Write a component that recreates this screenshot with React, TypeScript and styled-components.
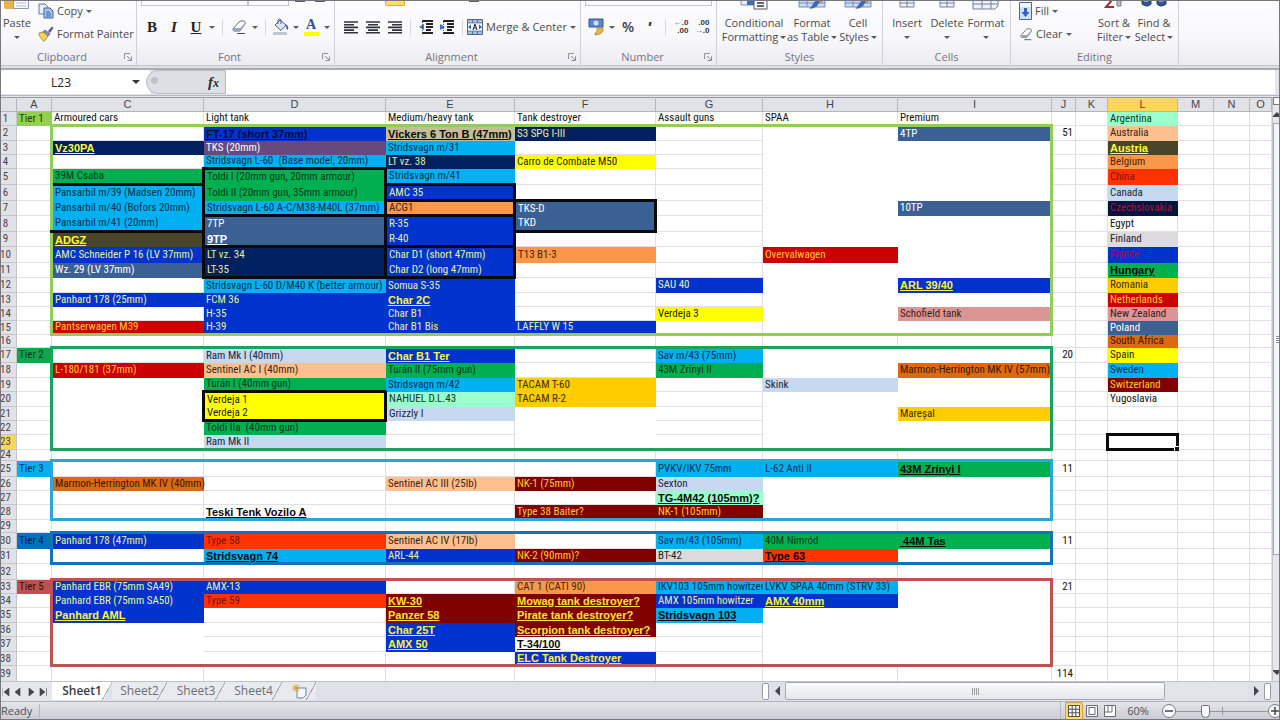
import React from "react";
import styled, { createGlobalStyle, css } from "styled-components";

const CELL_FONT = `"Roboto Condensed", "Liberation Sans", Arial, sans-serif`;
const UI_FONT = `"Open Sans", "Noto Sans", sans-serif`;

const GlobalStyle = createGlobalStyle`
  *, *::before, *::after { box-sizing: border-box; }
  body { margin: 0; background: #e4e5ea; font-family: ${UI_FONT}; }
  button, input { font: inherit; color: inherit; margin: 0; padding: 0; border: 0; background: none; }
`;

/* ---------- shell ---------- */

const Window = styled.main`
  display: flex;
  flex-direction: column;
  height: 100vh;
  overflow: hidden;
  outline: 1px solid #77777d;
  outline-offset: -1px;
  color: #4a4a50;
  font-size: 11px;
  line-height: 14px;
`;

/* ---------- ribbon ---------- */

const Ribbon = styled.header`
  display: flex;
  height: 66px;
  flex: none;
  overflow: hidden;
  background: linear-gradient(#fdfdfe, #f8f8fb 60%, #ececf1);
  border-bottom: 1px solid #c4c5cc;
`;

const Group = styled.section<{ $w: number }>`
  display: flex;
  flex-direction: column;
  width: ${(p) => p.$w}px;
  flex: none;
  border-right: 1px solid #d0d1d8;
`;

const GroupBody = styled.div`
  display: flex;
  height: 50px;
  padding-left: 4px;
`;

const GroupTitle = styled.footer<{ $plain?: boolean }>`
  display: flex;
  align-items: center;
  height: 14px;
  color: #74757f;
  padding-right: ${(p) => (p.$plain ? 0 : 4)}px;
  h2 { flex: 1; margin: 0; font-size: 11px; font-weight: 400; text-align: center; }
`;

const Stack = styled.div<{ $pl?: number; $w?: number }>`
  display: flex;
  flex-direction: column;
  padding-left: ${(p) => p.$pl || 0}px;
  width: ${(p) => (p.$w ? `${p.$w}px` : "auto")};
`;

const ToolRow = styled.div`
  display: flex;
  align-items: center;
  height: 24px;
`;

const StubRow = styled.div`
  display: flex;
  align-items: flex-start;
  height: 15px;
`;

const StubBox = styled.span<{ $w: number }>`
  width: ${(p) => p.$w}px;
  height: 6px;
  background: #fff;
  border: 1px solid #c6c7ce;
  border-top: 0;
`;

const StubHighlight = styled.span`
  width: 20px;
  height: 6px;
  margin-left: 46px;
  background: #ffe05a;
  border: 1px solid #d9ab3a;
  border-top: 0;
  border-radius: 0 0 2px 2px;
`;

const StubMark = styled.span<{ $ml: number }>`
  width: 10px;
  height: 2px;
  margin-left: ${(p) => p.$ml}px;
  background: #5c5e6a;
`;

const ToolButton = styled.button<{ $w: number }>`
  display: flex;
  align-items: center;
  justify-content: center;
  width: ${(p) => p.$w}px;
  height: 22px;
  flex: none;
`;

const Letter = styled.span<{ $kind: "b" | "i" | "u" }>`
  font: bold 15px/16px "Liberation Serif", serif;
  color: #222;
  ${(p) => p.$kind === "i" && css`font-style: italic;`}
  ${(p) => p.$kind === "u" && css`text-decoration: underline;`}
`;

const Rule = styled.span<{ $w: number }>`
  width: ${(p) => p.$w}px;
  height: 17px;
  flex: none;
  background: linear-gradient(#d9dae0, #d9dae0) center / 1px 100% no-repeat;
`;

const LabelButton = styled.button<{ $h?: number }>`
  display: flex;
  align-items: center;
  gap: 3px;
  height: ${(p) => p.$h || 24}px;
  white-space: nowrap;
  text-align: left;
`;

const TallButton = styled.button<{ $w: number }>`
  display: flex;
  flex-direction: column;
  align-items: center;
  width: ${(p) => p.$w}px;
  height: 46px;
  flex: none;
  white-space: nowrap;
  > svg { height: 16px; }
`;

const TallLine = styled.span`
  display: flex;
  align-items: center;
  gap: 2px;
  height: 14px;
`;

const Caret = styled.i<{ $big?: boolean }>`
  width: 0;
  height: 0;
  border: ${(p) => (p.$big ? 4 : 3)}px solid transparent;
  border-top-color: ${(p) => (p.$big ? "#33343a" : "#5a5b62")};
  border-bottom: 0;
`;

const Sign = styled.span<{ $heavy?: boolean }>`
  font-size: 14px;
  font-weight: ${(p) => (p.$heavy ? 800 : 600)};
  color: #3a3b41;
`;

const Launcher = () => (
  <svg width="8" height="8" viewBox="0 0 8 8" fill="none" stroke="#8e8f98">
    <path d="M0.5 6V0.5H6" />
    <path d="M7.5 3.5V7.5H3.5M3 3L7 7" />
  </svg>
);

const CopyIcon = () => (
  <svg width="16" height="16" viewBox="0 0 16 16">
    <path d="M1 1h6l3 3v7H1z" fill="#e9f0fb" stroke="#5577b5" />
    <path d="M6 5h6l3 3v7H6z" fill="#a9c6ee" stroke="#3c62a6" />
    <path d="M8 9h4M8 11h5M8 13h5" stroke="#3c62a6" />
  </svg>
);
const BrushIcon = () => (
  <svg width="16" height="16" viewBox="0 0 16 16">
    <path d="M10 5L14 0.5L15.5 2L12 7z" fill="#5b5a92" />
    <path d="M7 4l5 4-2 2-5-4z" fill="#8f8dc0" stroke="#4d4c7a" strokeWidth=".7" />
    <path d="M5 6l5 4-4 5.500C3 13 1 10 1 7z" fill="#f3d35b" stroke="#9a7d20" strokeWidth=".8" />
  </svg>
);
const PasteStub = () => (
  <svg width="26" height="16" viewBox="0 0 26 16">
    <path d="M0 0h9v9H2q-2 0-2-2z" fill="#e9b54a" />
    <path d="M9.500 0h15v8.500h-15z" fill="#f6f8fc" stroke="#8b98b5" />
    <path d="M12 3h10M12 6h10" stroke="#b4bfd6" />
  </svg>
);
const EraserIcon = ({ w = 16 }: { w?: number }) => (
  <svg width={w} height="16" viewBox="0 0 16 16">
    <path d="M2 10L8 3q1-1 2-1h3q2 1 1 3L9 12H3q-2-1-1-2z" fill="#fff" stroke="#6c6f7b" />
    <path d="M3 9h6l5-5v2L9 12H3z" fill="#9ea6b8" />
    <path d="M6 14.500h8" stroke="#4d4f58" />
  </svg>
);
const BucketIcon = () => (
  <svg width="18" height="18" viewBox="0 0 18 18">
    <path d="M3 7L8 2l6 5-5 5.500z" fill="#dfe6f2" stroke="#4e5f85" />
    <path d="M6 6V2q1.500-2 3 0v4" fill="none" stroke="#4e5f85" />
    <path d="M13 6q4 1 3 6q-2-1-2-4z" fill="#3560b4" />
    <path d="M1 14h14v3H1z" fill="#c2c8d4" />
  </svg>
);
const FontColor = styled.span`
  width: 15px;
  height: 18px;
  border-bottom: 4px solid #ffff00;
  font: bold 14px/14px "Liberation Serif", serif;
  color: #2f4f96;
  text-align: center;
`;
const Lines = ({ kind }: { kind: "l" | "c" | "r" }) => {
  const x = { l: 0, c: 2, r: 4 }[kind];
  return (
    <svg width="14" height="13" viewBox="0 0 14 13" stroke="#33343a" strokeWidth="1.600">
      <path d={`M0 1h14M${x} 3.700h10M0 6.400h14M${x} 9.100h10M0 11.800h14`} />
    </svg>
  );
};
const Indent = ({ out }: { out?: boolean }) => (
  <svg width="15" height="14" viewBox="0 0 15 14">
    <path d="M4 1h11M8 4h7M8 7h7M8 10h5M4 13h11" stroke="#222" strokeWidth="1.800" />
    <path d={out ? "M6 4v6L1 7z" : "M1 4v6l5-3z"} fill="#3e6fc0" />
    <path d="M4.500 0v14" stroke="#556" strokeDasharray="1 1" />
  </svg>
);
const MergeIcon = () => (
  <svg width="16" height="16" viewBox="0 0 16 16">
    <path d="M.5.5h15v15H.5z" fill="#a9bfe4" stroke="#4f658f" />
    <path d="M.5 4h15M.5 12h15M5.500.5V4M10.500.5V4M5.500 12v3.500M10.500 12v3.500" stroke="#5b6f98" />
    <path d="M1 4.500h14v7H1z" fill="#fff" />
    <path d="M1 8l3-2.500v5zM15 8l-3-2.500v5z" fill="#2f5fb0" />
    <path d="M6 11l2-6 2 6M7 9h2" fill="none" stroke="#222" />
  </svg>
);
const CurrencyIcon = () => (
  <svg width="17" height="18" viewBox="0 0 17 18">
    <path d="M1 1h14v8H1z" fill="#5d86cf" stroke="#31549a" />
    <circle cx="8" cy="5" r="2.500" fill="#cfdff7" />
    <path d="M9 10h6v3q-2 4-8 4v-2q3-1 2-5z" fill="#e6b84a" stroke="#a9801f" strokeWidth=".7" />
  </svg>
);
const Decimals = styled.span`
  display: block;
  font: bold 8px/8px "Liberation Sans", sans-serif;
  color: #33343a;
  text-align: right;
  b { color: #2f5fb0; }
`;
const CondStub = () => (
  <svg width="30" height="16" viewBox="0 0 30 16">
    <path d="M2 0h24v5H2z" fill="#e8eefb" stroke="#7f8fb5" />
    <path d="M8 0h8v5H8z" fill="#4169c0" />
    <path d="M15 0h13v9H15z" fill="#fff" stroke="#555" />
    <path d="M18 3h7M18 6h7" stroke="#333" strokeWidth="1.500" />
  </svg>
);
const TableStub = () => (
  <svg width="30" height="16" viewBox="0 0 30 16">
    <path d="M2 0h26v7H2zM10 0v7M19 0v7M2 3h26" fill="#cddcf5" stroke="#6f8cc4" />
    <path d="M24 0l-4 6q-5 4-8 2q3-1 4-4l3-4z" fill="#3e68b2" />
    <path d="M22 0h5l-4 4z" fill="#c98d4e" />
  </svg>
);
const GridStub = ({ wide }: { wide?: boolean }) => (
  <svg width="30" height="16" viewBox="0 0 30 16">
    <path d={wide ? "M2 0v9h22l3-3V0M2 4h25M11 0v9M20 0v9" : "M8 0v7h14V0M8 3h14M15 0v7"} fill="#eef2fb" stroke="#76809f" />
  </svg>
);
const FillIcon = () => (
  <svg width="13" height="18" viewBox="0 0 13 18">
    <path d="M.5.5h12v17H.5z" fill="#cfe0f8" stroke="#4468ad" />
    <path d="M1 1h11v4H1z" fill="#f4f7fc" />
    <path d="M5 6h3v4h2.500L6.500 15 2.500 10H5z" fill="#2f62c4" />
  </svg>
);
const SortStub = () => (
  <svg width="22" height="16" viewBox="0 0 22 16">
    <path d="M9 0L3 7h8" fill="none" stroke="#9c2f2f" strokeWidth="2" />
    <path d="M14 0h4v6h-4z" fill="#b9bcc8" stroke="#7a7d88" />
  </svg>
);
const FindStub = () => (
  <svg width="26" height="16" viewBox="0 0 26 16">
    <path d="M1 0h9v4q-4 4-9 0zM16 0h9v4q-5 4-9 0z" fill="#33578f" stroke="#1f3661" />
    <path d="M3 1h4M18 1h4" stroke="#9dbbe8" strokeWidth="1.500" />
  </svg>
);

/* ---------- formula bar ---------- */

const FormulaBar = styled.div`
  display: flex;
  flex: none;
  height: 31px;
  padding: 4px 5px 3px 0;
  background: linear-gradient(#dfe0e5 0 2px, #a9aab2 2px 4px, #e4e5ea 4px 29px, #b4b5bd 29px 30px, #e4e5ea 30px);
`;
const NameInput = styled.input`
  width: 122px;
  height: 24px;
  background: #fff;
  color: #222;
  text-align: center;
  font-size: 12px;
`;
const NameDrop = styled.button`
  width: 28px;
  height: 24px;
  background: #fff;
  display: flex;
  align-items: center;
  justify-content: center;
`;
const FxPill = styled.div`
  display: flex;
  align-items: center;
  justify-content: space-between;
  width: 80px;
  margin-left: -4px;
  height: 24px;
  padding: 0 6px 0 4px;
  background: #dddfe5;
  border: 1px solid #b8bac2;
  border-radius: 12px 0 0 12px;
  button { font: italic bold 15px/18px "Liberation Serif", serif; color: #2b2c30; }
  small { font-size: 12px; }
`;
const Knob = styled.span`
  width: 7px;
  height: 7px;
  margin-bottom: 4px;
  border-radius: 50%;
  background: #bfc1c8;
`;
const FormulaInput = styled.input`
  flex: 1;
  height: 24px;
  background: #fff;
`;

/* ---------- grid ---------- */

const Body = styled.div`
  display: flex;
  flex: 1;
  min-height: 0;
  background: #fff;
`;
const SheetArea = styled.div`
  flex: 1;
  min-width: 0;
  overflow: hidden;
`;
const Sheet = styled.table`
  width: 100%;
  table-layout: fixed;
  border-collapse: collapse;
  background: #fff;
  font: 11px/10px ${CELL_FONT};
  color: #111;
`;
const Row = styled.tr<{ $h: number }>`
  height: ${(p) => p.$h}px;
`;
const ColHead = styled.th<{ $on?: boolean }>`
  padding: 0;
  background: ${(p) => (p.$on ? "linear-gradient(#f9d567, #ffd94a)" : "#e1e2e8")};
  border: 1px solid #b4b6be;
  border-top: 1px solid #9b9ca3;
  color: ${(p) => (p.$on ? "#7a4a00" : "#44454c")};
  font: 11px/11px "Liberation Sans", sans-serif;
`;
const RowHead = styled.th<{ $on?: boolean }>`
  padding: 0;
  background: ${(p) => (p.$on ? "#ffd65c" : "#e1e2e8")};
  border: 1px solid #c3c5cc;
  font-weight: 400;
  color: #44454c;
  span { display: block; margin-left: -6px; text-align: center; }
`;

type Sides = { t?: string; r?: string; b?: string; l?: string };

const Cell = styled.td<{ $bg?: string; $fg?: string; $strong?: boolean; $right?: boolean; $sides: Sides; $line: string }>`
  position: relative;
  padding: 0 2px;
  white-space: pre;
  vertical-align: middle;
  border: 1px solid ${(p) => p.$line};
  background-color: ${(p) => p.$bg || "transparent"};
  color: ${(p) => p.$fg || "#111"};
  text-align: ${(p) => (p.$right ? "right" : "left")};
  ${(p) => p.$strong && css`
    font-family: "Liberation Sans", Arial, sans-serif;
    font-weight: 700;
    text-decoration: underline;
  `}
  ${(p) => p.$sides.t && css`border-top: 3px solid ${p.$sides.t};`}
  ${(p) => p.$sides.r && css`border-right: 3px solid ${p.$sides.r};`}
  ${(p) => p.$sides.b && css`border-bottom: 3px solid ${p.$sides.b};`}
  ${(p) => p.$sides.l && css`border-left: 3px solid ${p.$sides.l};`}
`;
const FillHandle = styled.i`
  position: absolute;
  right: -3px;
  bottom: -3px;
  width: 5px;
  height: 5px;
  background: #111;
  border-top: 1px solid #fff;
  border-left: 1px solid #fff;
`;

/* ---------- scroll bars, tabs, status ---------- */

const VScroll = styled.div`
  display: flex;
  flex-direction: column;
  align-items: center;
  width: 8px;
  background: #e6e7ec;
  border-left: 1px solid #c5c6cd;
  overflow: hidden;
`;
const VSplit = styled.span`
  width: 8px;
  height: 8px;
  border: 1px solid #777982;
  background: #fff;
  flex: none;
`;
const ScrollArrow = styled.button<{ $dir: "up" | "down" | "left" | "right" }>`
  display: flex;
  align-items: center;
  justify-content: center;
  flex: none;
  width: 16px;
  height: 18px;
  &::before {
    content: "";
    border: 5px solid transparent;
    ${(p) => p.$dir === "up" && css`border-top: 0; border-bottom-color: #44454c;`}
    ${(p) => p.$dir === "down" && css`border-bottom: 0; border-top-color: #44454c;`}
    ${(p) => p.$dir === "left" && css`border-left: 0; border-right-color: #44454c;`}
    ${(p) => p.$dir === "right" && css`border-right: 0; border-left-color: #44454c;`}
  }
`;
const VThumb = styled.div`
  width: 100%;
  flex: 4;
  border: 1px solid #a6a8b0;
  border-right: 0;
  background: #f4f5f8;
  display: flex;
  align-items: center;
  justify-content: flex-end;
  i { width: 4px; height: 7px; background: repeating-linear-gradient(#8d8f98 0 1px, #f4f5f8 1px 2px); }
`;
const VSpace = styled.div`
  flex: 1;
`;

const TabBar = styled.nav`
  display: flex;
  flex: none;
  height: 20px;
  background: #dfe1e8;
  border-top: 1px solid #c0c2ca;
`;
const NavArrows = styled.div`
  display: flex;
  width: 52px;
  align-items: center;
  padding-right: 3px;
  background: #e6e7ed;
  button { flex: 1; display: flex; justify-content: center; }
`;
const Tab = styled.button<{ $on?: boolean; $w: number }>`
  display: flex;
  align-items: center;
  justify-content: center;
  position: relative;
  width: ${(p) => p.$w}px;
  height: 18px;
  font-size: 12px;
  font-weight: ${(p) => (p.$on ? 600 : 400)};
  color: ${(p) => (p.$on ? "#3a3b40" : "#6d6e77")};
  background: ${(p) => (p.$on ? "#fff" : "#e9eaef")};
  clip-path: ${(p) => (p.$on ? "polygon(0 0, 100% 0, calc(100% - 8px) 100%, 0 100%)" : "none")};
  &::after {
    content: "";
    position: absolute;
    right: 0;
    top: 0;
    width: 10px;
    height: 18px;
    background: linear-gradient(to bottom right, transparent 48%, #a9abb4 48% 54%, transparent 54%);
  }
`;
const HSplit = styled.span`
  width: 7px;
  height: 17px;
  margin-top: 1px;
  background: #fff;
  border: 1px solid #9a9ca5;
  border-radius: 2px;
`;
const HScroll = styled.div`
  display: flex;
  width: 518px;
  margin-left: auto;
  padding-right: 9px;
`;
const HTrack = styled.div`
  display: flex;
  flex: 1;
  padding-right: 83px;
  background: #e3e4ea;
`;
const HThumb = styled.div`
  flex: 1;
  height: 18px;
  border: 1px solid #a6a8b0;
  border-radius: 2px;
  background: linear-gradient(#fafafc, #e6e7ed);
  display: flex;
  align-items: center;
  justify-content: center;
  i { width: 7px; height: 7px; background: repeating-linear-gradient(90deg, #9c9ea7 0 1px, #f0f1f4 1px 2px); }
`;
const StatusBar = styled.footer`
  display: flex;
  align-items: center;
  flex: none;
  height: 19px;
  border-top: 1px solid #b2b4bc;
  background: linear-gradient(#e4e5ea, #c9cbd3);
  color: #505158;
`;
const Ready = styled.span`
  width: 40px;
  border-right: 1px solid #b4b6be;
  padding-left: 1px;
`;
const ViewTools = styled.div`
  display: flex;
  align-items: center;
  margin-left: auto;
  padding-left: 4px;
  border-left: 1px solid #b4b6be;
`;
const ViewButton = styled.button<{ $on?: boolean }>`
  width: 18px;
  height: 18px;
  display: flex;
  align-items: center;
  justify-content: center;
  ${(p) => p.$on && css`background: #ffd96a; border-radius: 2px; box-shadow: inset 0 0 0 1px #d3a03a;`}
`;
const ZoomLabel = styled.output`
  width: 38px;
  text-align: center;
  margin-right: 5px;
`;
const RoundButton = styled.button`
  width: 14px;
  height: 14px;
  flex: none;
  display: flex;
  align-items: center;
  justify-content: center;
  border: 1px solid #77798a;
  border-radius: 50%;
  background: #fafafc;
`;
const Slider = styled.input`
  appearance: none;
  width: 92px;
  height: 14px;
  background: linear-gradient(#9698a1, #9698a1) center / 100% 1px no-repeat,
    linear-gradient(#9698a1, #9698a1) center / 1px 8px no-repeat;
  &::-webkit-slider-thumb {
    appearance: none;
    width: 9px;
    height: 13px;
    border: 1px solid #6c6e79;
    border-radius: 2px 2px 5px 5px;
    background: #fafafc;
  }
`;
const PlusWrap = styled.div`
  width: 12px;
  overflow: hidden;
`;

/* ---------- data ---------- */

type Fill = { bg?: string; fg?: string; strong?: string };
const FILL: Record<string, Fill> = {
  arg: { bg: "#99ffcc", fg: "#12352a" },
  aus: { bg: "#ffc090", fg: "#3a2412" },
  at: { bg: "#494529", strong: "#ffff33" },
  bel: { bg: "#fa9748", fg: "#4a2408" },
  chn: { bg: "#ff3300", fg: "#7a1400" },
  can: { bg: "#c6d9f1", fg: "#1c2638" },
  cz: { bg: "#002060", fg: "#e6ec9a", strong: "#ffff33" },
  czr: { bg: "#00143c", fg: "#b01040" },
  fin: { bg: "#dddadd", fg: "#222" },
  fra: { bg: "#0033cc", fg: "#e8f09a", strong: "#fff23c" },
  frr: { bg: "#0033cc", fg: "#a01050" },
  frk: { bg: "#0033cc", strong: "#050a3a" },
  hun: { bg: "#00b050", fg: "#043a1a" },
  rom: { bg: "#ffcc00", fg: "#3a2e00" },
  net: { bg: "#cc0000", fg: "#ffc83c" },
  nz: { bg: "#da9694", fg: "#3c1c1c" },
  pol: { bg: "#3a6094", fg: "#ffffff", strong: "#ffffff" },
  sa: { bg: "#dd6a12", fg: "#3a1800" },
  esp: { bg: "#ffff00", fg: "#222200" },
  swe: { bg: "#00b0f0", fg: "#06304e" },
  sui: { bg: "#800000", fg: "#ffc83c", strong: "#ffe43c" },
  pur: { bg: "#664a7e", fg: "#ffffff" },
  tan: { bg: "#c4bd97" },
  none: {},
  t1: { bg: "#92d050", fg: "#223a0a" },
  t2: { bg: "#10a64e", fg: "#043a1a" },
  t3: { bg: "#00b0f0", fg: "#06304e" },
  t4: { bg: "#0070c0", fg: "#03203c" },
  t5: { bg: "#c0504d", fg: "#3a0c0c" },
};

/* Cells per row: column, fill name, text. A "!" after the fill marks a bold underlined entry. */
const DATA: Record<number, [string, string, string][]> = {
  1: [["A", "t1", "Tier 1"], ["C", "none", "Armoured cars"], ["D", "none", "Light tank"], ["E", "none", "Medium/heavy tank"], ["F", "none", "Tank destroyer"], ["G", "none", "Assault guns"], ["H", "none", "SPAA"], ["I", "none", "Premium"], ["L", "arg", "Argentina"]],
  2: [["D", "frk!", "FT-17 (short 37mm)"], ["E", "tan!", "Vickers 6 Ton B (47mm)"], ["F", "cz", "S3 SPG I-III"], ["I", "pol", "4TP"], ["J", "none", "51"], ["L", "aus", "Australia"]],
  3: [["C", "cz!", "Vz30PA"], ["D", "pur", "TKS (20mm)"], ["E", "swe", "Stridsvagn m/31"], ["L", "at!", "Austria"]],
  4: [["D", "swe", "Stridsvagn L-60  (Base model, 20mm)"], ["E", "cz", "LT vz. 38"], ["F", "esp", "Carro de Combate M50"], ["L", "bel", "Belgium"]],
  5: [["C", "hun", "39M Csaba"], ["D", "hun", "Toldi I (20mm gun, 20mm armour)"], ["E", "swe", "Stridsvagn m/41"], ["L", "chn", "China"]],
  6: [["C", "swe", "Pansarbil m/39 (Madsen 20mm)"], ["D", "hun", "Toldi II (20mm gun, 35mm armour)"], ["E", "fra", "AMC 35"], ["L", "can", "Canada"]],
  7: [["C", "swe", "Pansarbil m/40 (Bofors 20mm)"], ["D", "swe", "Stridsvagn L-60 A-C/M38-M40L (37mm)"], ["E", "bel", "ACG1"], ["F", "pol", "TKS-D"], ["I", "pol", "10TP"], ["L", "czr", "Czechslovakia"]],
  8: [["C", "swe", "Pansarbil m/41 (20mm)"], ["D", "pol", "7TP"], ["E", "fra", "R-35"], ["F", "pol", "TKD"], ["L", "none", "Egypt"]],
  9: [["C", "at!", "ADGZ"], ["D", "pol!", "9TP"], ["E", "fra", "R-40"], ["L", "fin", "Finland"]],
  10: [["C", "fra", "AMC Schneider P 16 (LV 37mm)"], ["D", "cz", "LT vz. 34"], ["E", "fra", "Char D1 (short 47mm)"], ["F", "bel", "T13 B1-3"], ["H", "net", "Overvalwagen"], ["L", "frr", "France"]],
  11: [["C", "pol", "Wz. 29 (LV 37mm)"], ["D", "cz", "LT-35"], ["E", "fra", "Char D2 (long 47mm)"], ["L", "hun!", "Hungary"]],
  12: [["D", "swe", "Stridsvagn L-60 D/M40 K (better armour)"], ["E", "fra", "Somua S-35"], ["G", "fra", "SAU 40"], ["I", "fra!", "ARL 39/40"], ["L", "rom", "Romania"]],
  13: [["C", "fra", "Panhard 178 (25mm)"], ["D", "fra", "FCM 36"], ["E", "fra!", "Char 2C"], ["L", "net", "Netherlands"]],
  14: [["D", "fra", "H-35"], ["E", "fra", "Char B1"], ["G", "esp", "Verdeja 3"], ["I", "nz", "Schofield tank"], ["L", "nz", "New Zealand"]],
  15: [["C", "net", "Pantserwagen M39"], ["D", "fra", "H-39"], ["E", "fra", "Char B1 Bis"], ["F", "fra", "LAFFLY W 15"], ["L", "pol", "Poland"]],
  16: [["L", "sa", "South Africa"]],
  17: [["A", "t2", "Tier 2"], ["D", "can", "Ram Mk I (40mm)"], ["E", "fra!", "Char B1 Ter"], ["G", "swe", "Sav m/43 (75mm)"], ["J", "none", "20"], ["L", "esp", "Spain"]],
  18: [["C", "net", "L-180/181 (37mm)"], ["D", "aus", "Sentinel AC I (40mm)"], ["E", "hun", "Turán II (75mm gun)"], ["G", "hun", "43M Zrínyi II"], ["I", "sa", "Marmon-Herrington MK IV (57mm)"], ["L", "swe", "Sweden"]],
  19: [["D", "hun", "Turán I (40mm gun)"], ["E", "swe", "Stridsvagn m/42"], ["F", "rom", "TACAM T-60"], ["H", "can", "Skink"], ["L", "sui", "Switzerland"]],
  20: [["D", "esp", "Verdeja 1"], ["E", "arg", "NAHUEL D.L.43"], ["F", "rom", "TACAM R-2"], ["L", "none", "Yugoslavia"]],
  21: [["D", "esp", "Verdeja 2"], ["E", "can", "Grizzly I"], ["I", "rom", "Mareșal"]],
  22: [["D", "hun", "Toldi IIa  (40mm gun)"]],
  23: [["D", "can", "Ram Mk II"]],
  25: [["A", "t3", "Tier 3"], ["G", "swe", "PVKV/IKV 75mm"], ["H", "swe", "L-62 Anti II"], ["I", "hun!", "43M Zrínyi I"], ["J", "none", "11"]],
  26: [["C", "sa", "Marmon-Herrington MK IV (40mm)"], ["E", "aus", "Sentinel AC III (25lb)"], ["F", "sui", "NK-1 (75mm)"], ["G", "can", "Sexton"]],
  27: [["G", "arg!", "TG-4M42 (105mm)?"]],
  28: [["D", "none!", "Teski Tenk Vozilo A"], ["F", "sui", "Type 38 Baiter?"], ["G", "sui", "NK-1 (105mm)"]],
  30: [["A", "t4", "Tier 4"], ["C", "fra", "Panhard 178 (47mm)"], ["D", "chn", "Type 58"], ["E", "aus", "Sentinel AC IV (17lb)"], ["G", "swe", "Sav m/43 (105mm)"], ["H", "hun", "40M Nimród"], ["I", "hun!", " 44M Tas"], ["J", "none", "11"]],
  31: [["D", "swe!", "Stridsvagn 74"], ["E", "fra", "ARL-44"], ["F", "sui", "NK-2 (90mm)?"], ["G", "fin", "BT-42"], ["H", "chn!", "Type 63"]],
  33: [["A", "t5", "Tier 5"], ["C", "fra", "Panhard EBR (75mm SA49)"], ["D", "fra", "AMX-13"], ["F", "bel", "CAT 1 (CATI 90)"], ["G", "swe", "IKV103 105mm howitzer"], ["H", "swe", "LVKV SPAA 40mm (STRV 33)"], ["J", "none", "21"]],
  34: [["C", "fra", "Panhard EBR (75mm SA50)"], ["D", "chn", "Type 59"], ["E", "sui!", "KW-30"], ["F", "sui!", "Mowag tank destroyer?"], ["G", "fra", "AMX 105mm howitzer"], ["H", "fra!", "AMX 40mm"]],
  35: [["C", "fra!", "Panhard AML"], ["E", "sui!", "Panzer 58"], ["F", "sui!", "Pirate tank destroyer?"], ["G", "swe!", "Stridsvagn 103"]],
  36: [["E", "fra!", "Char 25T"], ["F", "sui!", "Scorpion tank destroyer?"]],
  37: [["E", "fra!", "AMX 50"], ["F", "none!", "T-34/100"]],
  38: [["F", "fra!", "ELC Tank Destroyer"]],
  39: [["J", "none", "114"]],
};

const COLS: [string, number | null][] = [
  ["A", 35], ["C", 152], ["D", 182], ["E", 129], ["F", 141], ["G", 107], ["H", 135], ["I", 154],
  ["J", 24], ["K", 32], ["L", 70], ["M", 36], ["N", 36], ["O", null],
];
const HEIGHTS = [
  14, 15, 14, 14, 16, 16, 15, 16, 15, 16, 15, 15, 14, 14, 14, 13, 15, 15, 14, 15,
  14, 14, 15, 11, 16, 14, 14, 15, 13, 16, 15, 16, 14, 14, 15, 14, 15, 14, 16,
];

/* Outlined ranges: first column, first row, last column, last row, colour. Later ones win. */
const BLACK = "#0a0a0a";
const OUTLINES: [string, number, string, number, string][] = [
  ["C", 6, "C", 8, BLACK], ["D", 5, "D", 7, BLACK], ["D", 8, "D", 9, BLACK],
  ["D", 10, "D", 11, BLACK], ["E", 6, "E", 6, BLACK], ["E", 7, "E", 7, BLACK],
  ["E", 8, "E", 9, BLACK], ["E", 10, "E", 11, BLACK], ["F", 7, "F", 8, BLACK],
  ["D", 20, "D", 21, BLACK], ["L", 23, "L", 23, BLACK],
  ["C", 2, "I", 15, "#92cc5c"], ["C", 17, "I", 23, "#1aa35c"], ["C", 25, "I", 28, "#2aa6dc"],
  ["C", 30, "I", 31, "#1672b4"], ["C", 33, "I", 38, "#bf5053"],
];

const sidesFor = (col: string, row: number): Sides => {
  const s: Sides = {};
  OUTLINES.forEach(([c1, r1, c2, r2, color]) => {
    if (col < c1 || col > c2 || row < r1 || row > r2) return;
    if (row === r1) s.t = color;
    if (row === r2) s.b = color;
    if (col === c1) s.l = color;
    if (col === c2) s.r = color;
  });
  return s;
};

const GRID = "#e2dde7";
const inTier = (r: number) => (r > 1 && r < 16) || (r > 16 && r < 24) || (r > 24 && r < 29) || r === 31 || (r > 32 && r < 39);
const lineFor = (col: string, row: number, bg?: string) => {
  if (bg) return bg;
  if (inTier(row) && (col === "H" || col === "I")) return "#fff";
  if (col === "C" && ((row > 18 && row < 24) || (row > 34 && row < 39))) return "#fff";
  if (col === "F" && row > 19 && row < 24) return "#fff";
  return GRID;
};

const SheetRow = ({ n, h }: { n: number; h: number }) => (
  <Row $h={h}>
    <RowHead scope="row" $on={n === 23}><span>{n}</span></RowHead>
    {COLS.map(([col]) => {
      const hit = (DATA[n] || []).find((d) => d[0] === col);
      const strong = !!hit && hit[1].endsWith("!");
      const fill: Fill = hit ? FILL[hit[1].replace("!", "")] : {};
      return (
        <Cell
          key={col}
          $bg={fill.bg}
          $fg={strong ? fill.strong || "#0a0a0a" : fill.fg}
          $strong={strong}
          $right={col === "J"}
          $sides={sidesFor(col, n)}
          $line={lineFor(col, n, fill.bg)}
        >
          {hit ? hit[2] : null}
          {col === "L" && n === 23 && <FillHandle />}
        </Cell>
      );
    })}
  </Row>
);

const Drop = ({ label }: { label: string }) => (
  <ToolButton $w={9} aria-label={label}><Caret /></ToolButton>
);

const Title = ({ text, plain }: { text: string; plain?: boolean }) => (
  <GroupTitle $plain={plain}><h2>{text}</h2>{!plain && <Launcher />}</GroupTitle>
);

export default function App() {
  return (
    <Window>
      <GlobalStyle />
      <Ribbon>
        <Group $w={137}>
          <GroupBody>
            <TallButton $w={26}><PasteStub /><TallLine>Paste</TallLine><TallLine><Caret /></TallLine></TallButton>
            <Stack $pl={8}>
              <LabelButton $h={22}><CopyIcon />Copy <Caret /></LabelButton>
              <LabelButton><BrushIcon />Format Painter</LabelButton>
            </Stack>
          </GroupBody>
          <Title text="Clipboard" />
        </Group>

        <Group $w={198}>
          <GroupBody>
            <Stack>
              <StubRow><StubBox $w={107} /><StubBox $w={41} /><StubMark $ml={6} /><StubMark $ml={10} /></StubRow>
              <ToolRow>
                <ToolButton $w={22} aria-label="Bold"><Letter $kind="b">B</Letter></ToolButton>
                <ToolButton $w={22} aria-label="Italic"><Letter $kind="i">I</Letter></ToolButton>
                <ToolButton $w={22} aria-label="Underline"><Letter $kind="u">U</Letter></ToolButton>
                <Drop label="Underline style" />
                <Rule $w={12} />
                <ToolButton $w={22} aria-label="Clear borders"><EraserIcon /></ToolButton>
                <Drop label="Borders" />
                <Rule $w={12} />
                <ToolButton $w={20} aria-label="Fill colour"><BucketIcon /></ToolButton>
                <Drop label="Fill colours" />
                <ToolButton $w={22} aria-label="Font colour"><FontColor>A</FontColor></ToolButton>
                <Drop label="Font colours" />
              </ToolRow>
            </Stack>
          </GroupBody>
          <Title text="Font" />
        </Group>

        <Group $w={246}>
          <GroupBody>
            <Stack>
              <StubRow><StubHighlight /><StubMark $ml={64} /></StubRow>
              <ToolRow>
                <ToolButton $w={23} aria-label="Align left"><Lines kind="l" /></ToolButton>
                <ToolButton $w={22} aria-label="Centre"><Lines kind="c" /></ToolButton>
                <ToolButton $w={22} aria-label="Align right"><Lines kind="r" /></ToolButton>
                <Rule $w={8} />
                <ToolButton $w={22} aria-label="Decrease indent"><Indent out /></ToolButton>
                <ToolButton $w={21} aria-label="Increase indent"><Indent /></ToolButton>
                <Rule $w={10} />
                <LabelButton><MergeIcon />Merge &amp; Center <Caret /></LabelButton>
              </ToolRow>
            </Stack>
          </GroupBody>
          <Title text="Alignment" />
        </Group>

        <Group $w={136}>
          <GroupBody>
            <Stack>
              <StubRow><StubBox $w={127} /></StubRow>
              <ToolRow>
                <ToolButton $w={22} aria-label="Accounting format"><CurrencyIcon /></ToolButton>
                <Drop label="Accounting formats" />
                <ToolButton $w={24} aria-label="Percent"><Sign>%</Sign></ToolButton>
                <ToolButton $w={20} aria-label="Comma"><Sign $heavy>’</Sign></ToolButton>
                <Rule $w={10} />
                <ToolButton $w={22} aria-label="More decimals"><Decimals><b>←</b>.0<br />.00</Decimals></ToolButton>
                <ToolButton $w={20} aria-label="Fewer decimals"><Decimals>.00<br /><b>→</b>.0</Decimals></ToolButton>
              </ToolRow>
            </Stack>
          </GroupBody>
          <Title text="Number" />
        </Group>

        <Group $w={166}>
          <GroupBody>
            <TallButton $w={66}><CondStub /><TallLine>Conditional</TallLine><TallLine>Formatting <Caret /></TallLine></TallButton>
            <TallButton $w={50}><TableStub /><TallLine>Format</TallLine><TallLine>as Table <Caret /></TallLine></TallButton>
            <TallButton $w={42}><TableStub /><TallLine>Cell</TallLine><TallLine>Styles <Caret /></TallLine></TallButton>
          </GroupBody>
          <Title text="Styles" plain />
        </Group>

        <Group $w={128}>
          <GroupBody>
            <TallButton $w={40}><GridStub /><TallLine>Insert</TallLine><TallLine><Caret /></TallLine></TallButton>
            <TallButton $w={40}><GridStub /><TallLine>Delete</TallLine><TallLine><Caret /></TallLine></TallButton>
            <TallButton $w={38}><GridStub wide /><TallLine>Format</TallLine><TallLine><Caret /></TallLine></TallButton>
          </GroupBody>
          <Title text="Cells" plain />
        </Group>

        <Group $w={168}>
          <GroupBody>
            <Stack $pl={4} $w={79}>
              <LabelButton $h={22}><FillIcon />Fill <Caret /></LabelButton>
              <LabelButton><EraserIcon w={14} />Clear <Caret /></LabelButton>
            </Stack>
            <TallButton $w={40}><SortStub /><TallLine>Sort &amp;</TallLine><TallLine>Filter <Caret /></TallLine></TallButton>
            <TallButton $w={40}><FindStub /><TallLine>Find &amp;</TallLine><TallLine>Select <Caret /></TallLine></TallButton>
          </GroupBody>
          <Title text="Editing" plain />
        </Group>
      </Ribbon>

      <FormulaBar>
        <NameInput aria-label="Name box" defaultValue="L23" />
        <NameDrop aria-label="Names"><Caret $big /></NameDrop>
        <FxPill><Knob /><button aria-label="Insert function">f<small>x</small></button></FxPill>
        <FormulaInput aria-label="Formula" />
      </FormulaBar>

      <Body>
        <SheetArea>
          <Sheet>
            <colgroup>
              <col width={16} />
              {COLS.map(([c, w]) => <col key={c} width={w || undefined} />)}
            </colgroup>
            <thead>
              <Row $h={14}>
                <ColHead scope="col" />
                {COLS.map(([c]) => <ColHead key={c} scope="col" $on={c === "L"}>{c}</ColHead>)}
              </Row>
            </thead>
            <tbody>
              {HEIGHTS.map((h, i) => <SheetRow key={i} n={i + 1} h={h} />)}
            </tbody>
          </Sheet>
        </SheetArea>
        <VScroll>
          <VSplit />
          <ScrollArrow $dir="up" aria-label="Scroll up" />
          <VThumb><i /></VThumb>
          <VSpace />
          <ScrollArrow $dir="down" aria-label="Scroll down" />
        </VScroll>
      </Body>

      <TabBar>
        <NavArrows>
          {["M0 0v8M7 0L2 4l5 4z", "M6 0L1 4l5 4z", "M2 0l5 4-5 4z", "M1 0l5 4-5 4zM7.500 0v8"].map((d) => (
            <button key={d} aria-label="Move through sheets">
              <svg width="8" height="8" viewBox="0 0 8 8"><path d={d} fill="#44454c" stroke="#44454c" strokeWidth=".6" /></svg>
            </button>
          ))}
        </NavArrows>
        <Tab $on $w={60}>Sheet1</Tab>
        <Tab $w={55}>Sheet2</Tab>
        <Tab $w={58}>Sheet3</Tab>
        <Tab $w={57}>Sheet4</Tab>
        <Tab $w={34} aria-label="New sheet">
          <svg width="15" height="15" viewBox="0 0 15 15">
            <path d="M5 4h9v7l-3 3H5z" fill="#f5f8fe" stroke="#6a80b0" />
            <path d="M4 0v8M0 4h8M1 1l6 6M7 1L1 7" stroke="#e09a2a" />
          </svg>
        </Tab>
        <HScroll>
          <HSplit />
          <ScrollArrow $dir="left" aria-label="Scroll left" />
          <HTrack><HThumb><i /></HThumb></HTrack>
          <ScrollArrow $dir="right" aria-label="Scroll right" />
          <HSplit />
        </HScroll>
      </TabBar>

      <StatusBar>
        <Ready>Ready</Ready>
        <ViewTools>
          <ViewButton $on aria-label="Normal view">
            <svg width="12" height="12" viewBox="0 0 12 12" fill="#fff" stroke="#4d4e55"><path d="M.5.5h11v11H.5zM4.200 0v12M7.800 0v12M0 4.200h12M0 7.800h12" /></svg>
          </ViewButton>
          <ViewButton aria-label="Page layout">
            <svg width="12" height="12" viewBox="0 0 12 12" fill="#fff" stroke="#6a6b74"><path d="M.5.5h11v11H.5zM3 2.500h6v7H3z" /></svg>
          </ViewButton>
          <ViewButton aria-label="Page breaks">
            <svg width="12" height="12" viewBox="0 0 12 12" fill="#fff" stroke="#6a6b74"><path d="M.5.5h11v11H.5zM4 0v7M8 0v7M0 7h8" /></svg>
          </ViewButton>
          <ZoomLabel>60%</ZoomLabel>
          <RoundButton aria-label="Zoom out"><svg width="8" height="8"><path d="M0 4h8" stroke="#44454c" strokeWidth="1.500" /></svg></RoundButton>
          <Slider type="range" aria-label="Zoom" min={0} max={100} defaultValue={30} />
          <PlusWrap><RoundButton aria-label="Zoom in"><svg width="8" height="8"><path d="M0 4h8M4 0v8" stroke="#44454c" strokeWidth="1.500" /></svg></RoundButton></PlusWrap>
        </ViewTools>
      </StatusBar>
    </Window>
  );
}
